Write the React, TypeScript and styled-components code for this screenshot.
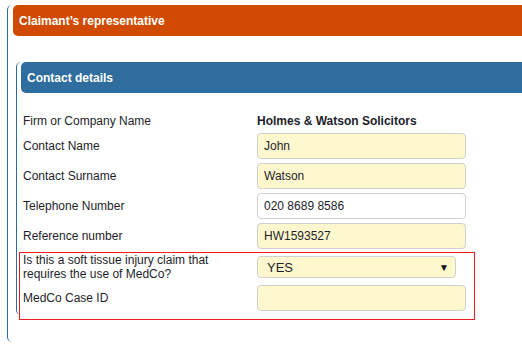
import React from 'react';
import styled, { createGlobalStyle } from 'styled-components';

const GlobalStyle = createGlobalStyle`
  html, body {
    margin: 0;
    padding: 0;
    background: #fff;
    overflow: hidden;
  }
  body {
    font-family: "Liberation Sans", Arial, sans-serif;
    font-size: 12px;
    color: #1e1e2a;
  }
`;

const Page = styled.div`
  padding: 20px 0 0 7px;
  width: 522px;
  height: 348px;
  box-sizing: border-box;
`;

const Panel = styled.section<{ $line: string }>`
  border-left: 1px solid ${(p) => p.$line};
  border-radius: 5px;
`;

const OuterPanel = styled(Panel)`
  padding-bottom: 27px;
`;

const InnerPanel = styled(Panel)`
  margin: 41px 0 0 8px;
`;

const Header = styled.div<{ $bg: string; $indent: number }>`
  height: 31px;
  margin: -15px 0 0 ${(p) => p.$indent}px;
  padding-left: 6px;
  display: flex;
  align-items: center;
  background: ${(p) => p.$bg};
  border-radius: 5px 0 0 5px;
  color: #fff;
  font-weight: bold;
  font-size: 12px;
`;

const Form = styled.div`
  padding: 20px 0 0 6px;
  display: flex;
  flex-direction: column;
`;

const Row = styled.div<{ $top?: boolean }>`
  display: grid;
  grid-template-columns: 234px 209px;
  align-items: ${(p) => (p.$top ? 'start' : 'center')};
  & + & {
    margin-top: 4px;
  }
`;

const Label = styled.div`
  line-height: 14px;
`;

const Value = styled.div`
  font-weight: bold;
  line-height: 16px;
`;

const Input = styled.div<{ $plain?: boolean }>`
  height: 26px;
  box-sizing: border-box;
  padding: 0 6px;
  display: flex;
  align-items: center;
  background: ${(p) => (p.$plain ? '#fff' : '#fff8cf')};
  border: 1px solid #d0d0d0;
  border-radius: 4px;
  font-size: 12px;
`;

const Select = styled.div`
  width: 199px;
  height: 22px;
  margin-top: 3px;
  box-sizing: border-box;
  padding: 0 6px 0 9px;
  display: flex;
  align-items: center;
  justify-content: space-between;
  background: #fff8cf;
  border: 1px solid #d0d0d0;
  border-radius: 4px;
  font-size: 13px;
`;

const Arrow = styled.span`
  font-size: 10px;
  color: #111;
`;

const Highlight = styled.div`
  margin: 3px 0 -5px -4px;
  width: 456px;
  box-sizing: border-box;
  padding: 0 8px 8px 3px;
  border: 1px solid #ec1c24;
  display: flex;
  flex-direction: column;
`;

export default function App() {
  return (
    <>
      <GlobalStyle />
      <Page>
        <OuterPanel $line="#2d6b9a">
          <Header $bg="#d04a02" $indent={5}>Claimant’s representative</Header>
          <InnerPanel $line="#2d6b9a">
            <Header $bg="#2e6d9e" $indent={4}>Contact details</Header>
            <Form>
              <Row>
                <Label>Firm or Company Name</Label>
                <Value>Holmes &amp; Watson Solicitors</Value>
              </Row>
              <Row>
                <Label>Contact Name</Label>
                <Input>John</Input>
              </Row>
              <Row>
                <Label>Contact Surname</Label>
                <Input>Watson</Input>
              </Row>
              <Row>
                <Label>Telephone Number</Label>
                <Input $plain>020 8689 8586</Input>
              </Row>
              <Row>
                <Label>Reference number</Label>
                <Input>HW1593527</Input>
              </Row>
              <Highlight>
                <Row $top>
                  <Label>
                    Is this a soft tissue injury claim that
                    <br />
                    requires the use of MedCo?
                  </Label>
                  <Select>
                    <span>YES</span>
                    <Arrow>▼</Arrow>
                  </Select>
                </Row>
                <Row>
                  <Label>MedCo Case ID</Label>
                  <Input />
                </Row>
              </Highlight>
            </Form>
          </InnerPanel>
        </OuterPanel>
      </Page>
    </>
  );
}
